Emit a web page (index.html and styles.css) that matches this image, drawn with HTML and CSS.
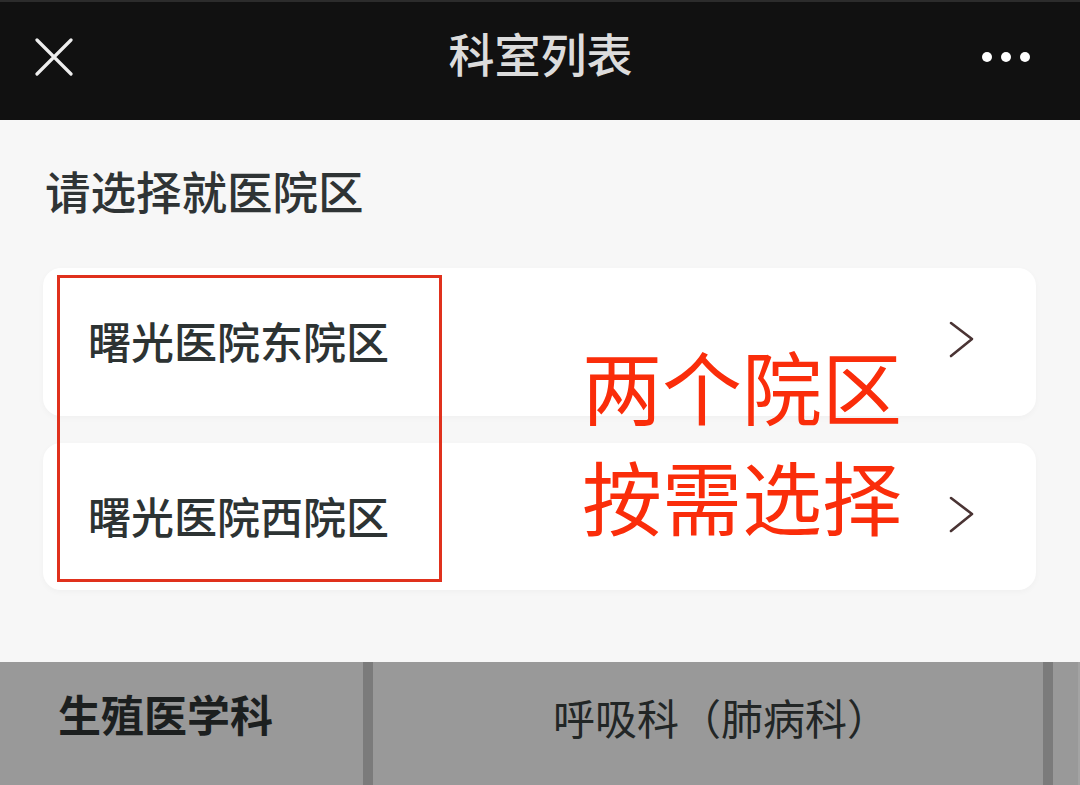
FILE: index.html
```html
<!DOCTYPE html>
<html lang="zh-CN">
<head>
    <meta charset="UTF-8">
    <meta name="viewport" content="width=device-width, initial-scale=1.0">
    <title>科室列表</title>
    <link rel="stylesheet" href="styles.css">
</head>
<body>

<div class="page">
    <div class="topbar">
        <span class="close">
            <svg width="38" height="38" viewBox="0 0 38 38">
                <path d="M2 2 L36 36 M36 2 L2 36" stroke="#eeeeee" stroke-width="3.2" stroke-linecap="round" fill="none"/>
            </svg>
        </span>
        <h1 class="title">科室列表</h1>
        <span class="more">
            <i></i><i></i><i></i>
        </span>
    </div>

    <div class="campus">
        <h2 class="campus-title">请选择就医院区</h2>

        <div class="campus-list">
            <div class="campus-item">
                <span class="campus-name">曙光医院东院区</span>
                <svg class="arrow" width="26" height="38" viewBox="0 0 26 38">
                    <path d="M2 2 L23 18 L2 35" stroke="#4a3434" stroke-width="2.6" stroke-linecap="round" stroke-linejoin="round" fill="none"/>
                </svg>
            </div>
            <div class="campus-item">
                <span class="campus-name">曙光医院西院区</span>
                <svg class="arrow" width="26" height="38" viewBox="0 0 26 38">
                    <path d="M2 2 L23 18 L2 35" stroke="#4a3434" stroke-width="2.6" stroke-linecap="round" stroke-linejoin="round" fill="none"/>
                </svg>
            </div>

            <!-- annotation drawn on top of the screenshot -->
            <div class="mark-box"></div>
            <div class="mark-text">两个院区<br>按需选择</div>
        </div>
    </div>

    <div class="dept-strip">
        <div class="dept-side">生殖医学科</div>
        <div class="dept-sep"></div>
        <div class="dept-main">呼吸科（肺病科）</div>
        <div class="dept-sep"></div>
        <div class="dept-rest"></div>
    </div>
</div>

</body>
</html>
```

FILE: styles.css
```css
* {
    box-sizing: border-box;
}
html, body {
    margin: 0;
    padding: 0;
}
body {
    font-family: "Noto Sans CJK SC", "Noto Sans", sans-serif;
    background-color: #f7f7f7;
    width: 1080px;
    height: 785px;
    overflow: hidden;
}
.page {
    display: flex;
    flex-direction: column;
    height: 785px;
}

/* top navigation bar */
.topbar {
    height: 120px;
    background-color: #111111;
    border-top: 2px solid #2c2c2c;
    display: flex;
    align-items: center;
    justify-content: space-between;
    padding: 0 50px 8px 35px;
}
.close {
    display: flex;
    width: 38px;
    height: 38px;
}
.title {
    margin: 0 0 0 26px;
    font-size: 46px;
    font-weight: 500;
    line-height: 52px;
    color: #dcdcdc;
    position: relative;
    top: -5px;
}
.more {
    display: flex;
    gap: 9px;
}
.more i {
    display: block;
    width: 10px;
    height: 10px;
    border-radius: 50%;
    background-color: #ffffff;
}

/* campus choice */
.campus {
    flex: 1;
    padding: 46px 44px 0 43px;
}
.campus-title {
    margin: 0;
    padding-left: 2px;
    font-size: 45.5px;
    font-weight: 500;
    line-height: 48px;
    color: #2f3435;
}
.campus-list {
    position: relative;
    margin-top: 54px;
    display: flex;
    flex-direction: column;
    gap: 27px;
}
.campus-item {
    height: 148px;
    background-color: #ffffff;
    border-radius: 18px;
    box-shadow: 0 2px 6px rgba(0, 0, 0, 0.03);
    display: flex;
    align-items: center;
    justify-content: space-between;
    padding: 0 61px 4px 45px;
}
.campus-item + .campus-item {
    height: 147px;
}
.campus-name {
    font-size: 43px;
    font-weight: 500;
    line-height: 48px;
    color: #2d3333;
}
.arrow {
    display: block;
}

.mark-box {
    position: absolute;
    left: 14px;
    top: 7px;
    width: 385px;
    height: 307px;
    border: 3px solid #e0311d;
}
.mark-text {
    position: absolute;
    left: 539px;
    top: 61px;
    font-size: 80px;
    line-height: 110px;
    color: #fa2d0a;
}

/* dimmed department strip */
.dept-strip {
    height: 123px;
    display: flex;
    background-color: #999999;
}
.dept-side {
    width: 363px;
    padding: 0 0 22px 58px;
    display: flex;
    align-items: center;
    font-size: 43px;
    font-weight: 700;
    color: #1c1f1f;
}
.dept-sep {
    width: 10px;
    background-color: #7b7b7b;
}
.dept-main {
    flex: 1;
    display: flex;
    align-items: center;
    justify-content: center;
    padding: 0 0 14px 26px;
    font-size: 42px;
    color: #222626;
}
.dept-rest {
    width: 27px;
    border-right: 2px solid #a3a3a3;
}
```
